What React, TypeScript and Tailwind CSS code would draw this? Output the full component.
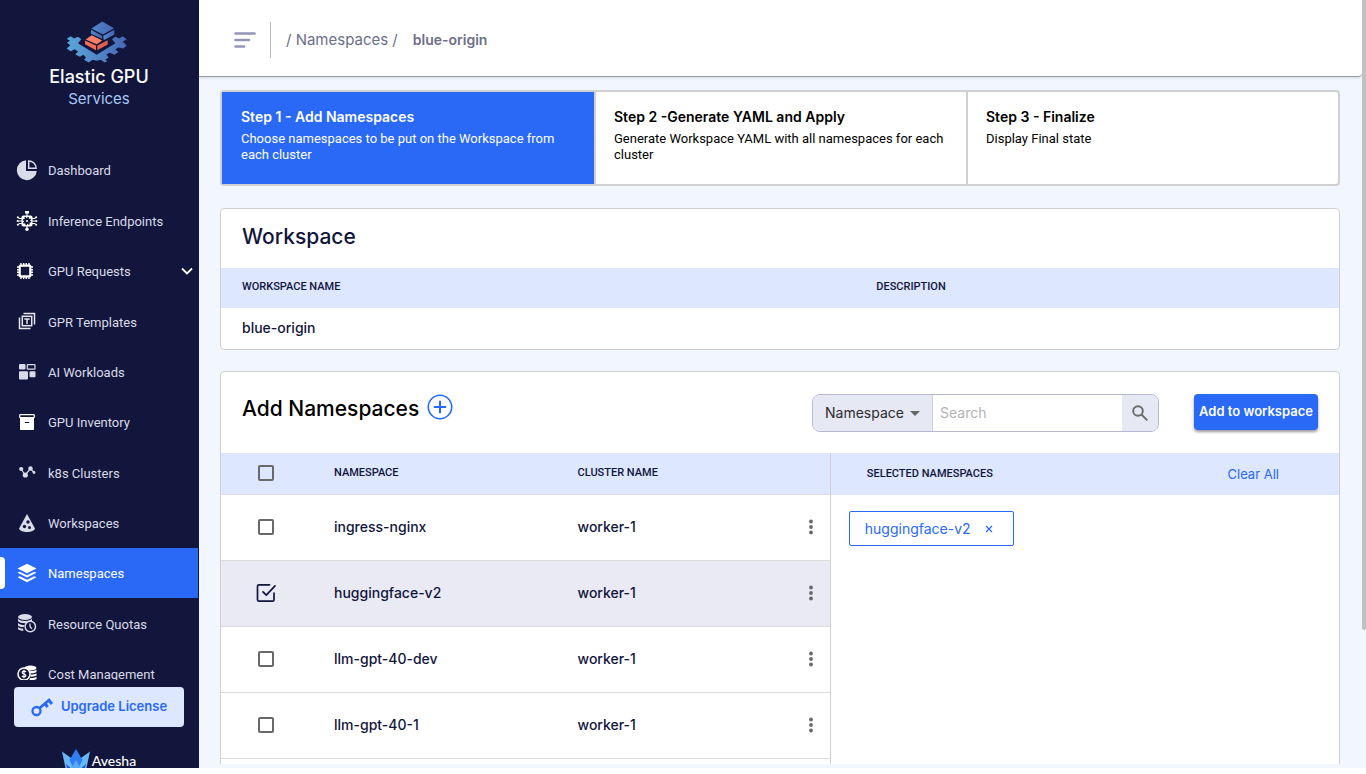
import { useState, type ReactNode } from "react";

type NavItem = {
  label: string;
  icon: ReactNode;
  active?: boolean;
  expandable?: boolean;
};

const NAV_ITEMS: NavItem[] = [
  { label: "Dashboard", icon: <DashboardIcon /> },
  { label: "Inference Endpoints", icon: <InferenceIcon /> },
  { label: "GPU Requests", icon: <ChipIcon />, expandable: true },
  { label: "GPR Templates", icon: <TemplatesIcon /> },
  { label: "AI Workloads", icon: <WorkloadsIcon /> },
  { label: "GPU Inventory", icon: <InventoryIcon /> },
  { label: "k8s Clusters", icon: <ClustersIcon /> },
  { label: "Workspaces", icon: <WorkspacesIcon /> },
  { label: "Namespaces", icon: <LayersIcon />, active: true },
  { label: "Resource Quotas", icon: <QuotasIcon /> },
  { label: "Cost Management", icon: <CostIcon /> },
];

const STEPS = [
  {
    title: "Step 1 - Add Namespaces",
    text: "Choose namespaces to be put on the Workspace from each cluster",
  },
  {
    title: "Step 2 -Generate YAML and Apply",
    text: "Generate Workspace YAML with all namespaces for each cluster",
  },
  { title: "Step 3 - Finalize", text: "Display Final state" },
];

const NAMESPACES = [
  { name: "ingress-nginx", cluster: "worker-1" },
  { name: "huggingface-v2", cluster: "worker-1" },
  { name: "llm-gpt-40-dev", cluster: "worker-1" },
  { name: "llm-gpt-40-1", cluster: "worker-1" },
];

function DashboardIcon() {
  return (
    <svg viewBox="0 0 22 22" className="size-[22px]" fill="#dadbe8">
      <path d="M10 1.2A10 10 0 1 0 20.800 12H10Z" />
      <path
        d="M12.700 1.900v7.400h7.400a7.400 7.400 0 0 0-7.400-7.400Z"
        fill="none"
        stroke="#dadbe8"
        strokeWidth="1.500"
      />
    </svg>
  );
}

function InferenceIcon() {
  return (
    <svg viewBox="0 0 22 22" className="size-[22px]" fill="#fff">
      <rect x="5.500" y="5.500" width="11" height="11" rx="1.800" />
      <circle cx="11" cy="11" r="3.200" fill="#12153c" />
      <circle cx="11" cy="11" r="3.700" fill="none" stroke="#12153c" strokeWidth="1.200" strokeDasharray="1.450 1.450" />
      <circle cx="11" cy="11" r="1" />
      <path
        d="M11 2v4M11 16v3M6 8.500H3.500L2 7.500M6 11H1.500M6 13.500H3.500L2 14.500M16 8.500h2.500l1.500-1M16 11h4.500M16 13.500h2.500l1.500 1"
        fill="none"
        stroke="#fff"
        strokeWidth="1.100"
      />
      <rect x="9" y="1" width="4" height="2.500" />
      <circle cx="11" cy="19.200" r="1.700" />
      <circle cx="1.800" cy="7.300" r="1" />
      <circle cx="1.600" cy="11" r="1" />
      <circle cx="1.800" cy="14.700" r="1" />
      <circle cx="20.200" cy="7.300" r="1" />
      <circle cx="20.400" cy="11" r="1" />
      <circle cx="20.200" cy="14.700" r="1" />
    </svg>
  );
}

function ChipIcon() {
  return (
    <svg viewBox="0 0 18 18" className="mr-1 size-[18px]" fill="none" stroke="#fff">
      <rect x="3.700" y="3.700" width="10.600" height="10.600" rx=".6" strokeWidth="2.200" />
      <path
        d="M5 1v2M7.700 1v2M10.300 1v2M13 1v2M5 15v2M7.700 15v2M10.300 15v2M13 15v2M1 5h2M1 7.700h2M1 10.300h2M1 13h2M15 5h2M15 7.700h2M15 10.300h2M15 13h2"
        strokeWidth="1.400"
      />
    </svg>
  );
}

function TemplatesIcon() {
  return (
    <svg viewBox="0 0 18 18" className="size-[18px]" fill="none" stroke="#e6e7f0">
      <path d="M5.500 1.500h11V12.500M1.500 5.500v11h11" strokeWidth="1.500" />
      <rect x="4.300" y="4.300" width="9.400" height="9.400" strokeWidth="1.500" />
      <path d="M6.300 7h5.400M9 7v5" strokeWidth="1.500" />
    </svg>
  );
}

function WorkloadsIcon() {
  return (
    <svg viewBox="0 0 18 18" className="size-[18px]" fill="#dadbe8">
      <rect x="1" y="1" width="6.500" height="5.500" rx="1" />
      <rect x="1" y="8.200" width="9" height="8.300" rx="1" />
      <rect x="11.500" y="8.200" width="6" height="6" rx="1" />
      <rect x="9.300" y="1.600" width="7.700" height="4.600" rx=".6" fill="none" stroke="#dadbe8" strokeWidth="1.200" />
    </svg>
  );
}

function InventoryIcon() {
  return (
    <svg viewBox="0 0 18 18" className="size-[18px]" fill="#fff">
      <rect x="1.700" y="1.700" width="14.600" height="3" rx=".8" fill="none" stroke="#fff" strokeWidth="1.200" />
      <path d="M2 5h14v11.200a.8.8 0 0 1-.8.8H2.800a.8.8 0 0 1-.8-.8Z" />
      <path d="M6.800 9.500h4.400" stroke="#12153c" strokeWidth="1" />
    </svg>
  );
}

function ClustersIcon() {
  return (
    <svg viewBox="0 0 18 18" className="size-[18px]" fill="#dadbe8">
      <path d="m3 6 4.200 6L12.500 5.500 16 9.500" fill="none" stroke="#dadbe8" strokeWidth="1.200" />
      <circle cx="3.200" cy="6" r="2.100" />
      <circle cx="7.300" cy="12" r="2.600" />
      <circle cx="12.500" cy="5.500" r="2.200" />
      <circle cx="16" cy="9.500" r="1.400" />
    </svg>
  );
}

function WorkspacesIcon() {
  return (
    <svg viewBox="0 0 18 20" className="h-5 w-[18px]" fill="#dadbe8">
      <path d="M9 1 1.200 15.200C1.200 20.300 16.800 20.300 16.800 15.200Z" />
      <circle cx="10" cy="9" r="1.700" fill="#12153c" />
      <circle cx="6.500" cy="13.500" r="1.700" fill="#12153c" />
      <circle cx="11.500" cy="14.500" r="1.500" fill="#12153c" />
    </svg>
  );
}

function LayersIcon() {
  return (
    <svg viewBox="0 0 20 20" className="size-5" fill="#fff">
      <path d="M10 .8 19.500 5.500 10 10.200.5 5.500Z" />
      <path d="m.5 9.800 2.200-1.100L10 12.300l7.300-3.600 2.200 1.100L10 14.600Z" />
      <path d="m.5 14.300 2.200-1.100L10 16.800l7.300-3.600 2.200 1.100L10 19.200Z" />
    </svg>
  );
}

function QuotasIcon() {
  return (
    <svg viewBox="0 0 20 20" className="size-5" fill="#dadbe8">
      <ellipse cx="8" cy="4" rx="7" ry="3" />
      <path d="M1 5.800c2.500 3 11.500 3 14 0v2.400l-4 1.700c-4 1-8.500 0-10-1.600Z" />
      <path d="M1 10c1.500 1.500 4 2 6.500 2l-1 2.300C4 14.200 2 13.600 1 12.600Z" />
      <path d="M1 14c1.200 1 3 1.600 5 1.700l.6 2.100C4 17.800 2 17 1 16.200Z" />
      <circle cx="13.300" cy="13.500" r="5.200" fill="#12153c" stroke="#dadbe8" strokeWidth="1.500" />
      <path d="M13 10.500v3.300l2 2" fill="none" stroke="#dadbe8" strokeWidth="1.300" />
    </svg>
  );
}

function CostIcon() {
  return (
    <svg viewBox="0 0 20 20" className="size-5" fill="#fff">
      <ellipse cx="13.500" cy="4" rx="6" ry="2.600" />
      <path d="M12 7c3 .3 6-.2 7.500-1.300v2.200c-1.700 1.200-4 1.500-6.500 1.300ZM13.500 10.500c2.500.1 4.600-.3 6-1.200v2.200c-1.600.9-3.800 1.300-6 1.100ZM13.300 14c2.600.1 4.700-.3 6.200-1.200v2.200c-2 1.300-4.500 1.500-7.200 1.200Z" />
      <circle cx="7" cy="10" r="6" fill="#12153c" stroke="#fff" strokeWidth="1.500" />
      <path
        d="M9 8C8 6.700 5.200 6.900 5.200 8.500c0 1.900 3.700 1.200 3.700 3.100 0 1.600-2.900 1.700-3.900.3M7 5.800v8.400"
        fill="none"
        stroke="#fff"
        strokeWidth="1.200"
      />
    </svg>
  );
}

function BrandMark() {
  return (
    <svg viewBox="204 62 186 128" className="mr-1 h-[43px] w-[62px]" aria-hidden="true">
      <defs>
        <linearGradient id="gear" x1="0" x2="1">
          <stop offset="0" stopColor="#5ba6dc" />
          <stop offset="1" stopColor="#4668b4" />
        </linearGradient>
        <linearGradient id="cube" x1="0" x2="1">
          <stop offset="0" stopColor="#5188c8" />
          <stop offset="1" stopColor="#4365b2" />
        </linearGradient>
      </defs>
      <path
        fill="url(#gear)"
        d="M218 110 228 117 240 112 250 119 240 131 296 166 352 131 342 119 352 112 364 117 374 110 386 119 374 127 386 138 376 147 362 144 352 149 361 158 349 166 336 160 325 164 332 174 322 180 328 185 320 189 308 181 296 184 284 181 272 189 258 181 264 174 256 166 246 172 232 165 240 156 230 149 218 155 206 147 217 137 207 130 216 124 206 118Z"
      />
      <g fill="url(#cube)">
        <path d="m313 66 35 20-33 19-35-18Z" />
        <path d="m279 91 33 18v14l-33-17Z" />
        <path d="m349 91-33 18v14l33-18Z" />
      </g>
      <path fill="#12153c" d="m278 102 43 20 12-5v20l-37 21-39-18v-22Z" />
      <path fill="#fa8068" d="m281 107 32 16-17 11-33-14Z" />
      <path fill="#f06d58" d="m261 123 33 15v14l-33-18Z" />
      <path fill="#e3604e" d="m298 138 31-16v13l-31 17Z" />
    </svg>
  );
}

function AveshaMark() {
  return (
    <svg viewBox="0 0 28 26" className="h-[26px] w-7" aria-hidden="true">
      <path fill="#69b7f5" d="M0 2.500 9 9l5 13v4H5Z" />
      <path fill="#69b7f5" d="M28 2.500 19 9l-5 13v4h9Z" />
      <path fill="#2f7df0" d="M14 0 20.500 11 14 24 7.500 11Z" />
      <path fill="#2257c8" d="m4 15 10 9 10-9-3 11H7Z" />
      <path fill="#58aaf5" d="m14 11 5 9-5 6-5-6Z" />
    </svg>
  );
}

function KeyIcon() {
  return (
    <svg viewBox="0 0 22 20" className="h-5 w-[22px]" fill="none" stroke="#2969f5" aria-hidden="true">
      <circle cx="5.500" cy="14" r="4" strokeWidth="2.300" />
      <path d="M8.500 11.300 19 2.300" strokeWidth="2.600" />
      <path d="m13.500 6 3.200 4M17 2.500l4 4.500" strokeWidth="3" />
    </svg>
  );
}

function Sidebar() {
  return (
    <aside className="flex w-[199px] shrink-0 flex-col bg-[#12153c] pr-px">
      <div className="flex h-[145px] shrink-0 flex-col items-center pt-5">
        <BrandMark />
        <p className="mt-0.5 text-lg leading-6 font-medium text-white">Elastic GPU</p>
        <p className="text-[15px] leading-5 text-[#a9c8f5]">Services</p>
      </div>

      <nav className="min-h-0 flex-1 overflow-hidden">
        <ul className="grid h-[554px] auto-rows-fr">
          {NAV_ITEMS.map((item) => (
            <li key={item.label}>
              <a
                href="#"
                aria-current={item.active ? "page" : undefined}
                className={
                  item.active
                    ? "relative flex h-full items-center bg-[#2969f5] pl-4 font-['Roboto'] text-[13px] text-white"
                    : "relative flex h-full items-center pl-4 font-['Roboto'] text-[13px] text-[#dadbe8]"
                }
              >
                {item.active ? (
                  <span className="absolute top-1/2 left-0 h-8 w-[5px] -translate-y-1/2 rounded-r bg-white" />
                ) : null}
                <span className="flex w-[22px] justify-center">{item.icon}</span>
                <span className="ml-2.5 pt-0.5">{item.label}</span>
                {item.expandable ? (
                  <svg viewBox="0 0 12 8" className="mr-[5px] ml-auto h-2 w-3" fill="none" stroke="#fff" strokeWidth="1.800">
                    <path d="m1 1.500 5 5 5-5" />
                  </svg>
                ) : null}
              </a>
            </li>
          ))}
        </ul>
      </nav>

      <div className="flex h-[88px] shrink-0 flex-col items-center overflow-hidden pt-[7px]">
        <button
          type="button"
          className="flex h-10 w-[170px] shrink-0 items-center justify-center gap-2 rounded bg-[#dde7ff] text-[13px] font-semibold text-[#2969f5]"
        >
          <KeyIcon />
          Upgrade License
        </button>
        <div className="mt-[22px] flex items-start gap-0.5">
          <AveshaMark />
          <span className="font-['Lato'] text-sm leading-6 font-medium text-white">Avesha</span>
        </div>
      </div>
    </aside>
  );
}

function Header() {
  return (
    <header className="flex h-[77px] shrink-0 items-center rounded-br border-b border-[#999da3] bg-white pt-1 pl-[35px] shadow-sm">
      <button type="button" aria-label="Toggle menu">
        <svg viewBox="0 0 22 16" className="h-4 w-[22px]" stroke="#9396b8" strokeWidth="2.600" strokeLinecap="round">
          <path d="M1.500 1.500h19M1.500 8h13.500M1.500 14.500H10" />
        </svg>
      </button>
      <span className="ml-3.5 h-9 w-px bg-[#b5b7d3]" />
      <nav className="ml-[15px] flex items-center gap-[15px] text-[#6c6f88]">
        <span className="text-[15px]">
          / <a href="#">Namespaces</a> /
        </span>
        <span className="text-sm font-semibold">blue-origin</span>
      </nav>
    </header>
  );
}

function Steps() {
  return (
    <ol className="grid h-24 shrink-0 grid-cols-3 rounded border-2 border-[#d0d0d0] bg-white">
      {STEPS.map((step, index) => (
        <li
          key={step.title}
          className={
            index === 0
              ? "bg-[#2969f5] px-[19px] pt-[15px] text-white"
              : "border-l-2 border-[#d0d0d0] px-[18px] pt-[15px] text-black"
          }
        >
          <h2 className="text-sm leading-5 font-semibold">{step.title}</h2>
          <p className="mt-1 font-['Roboto'] text-[13px] leading-4">{step.text}</p>
        </li>
      ))}
    </ol>
  );
}

function WorkspaceCard() {
  return (
    <section className="mt-[22px] shrink-0 rounded border border-[#cfcfcf] bg-white">
      <h2 className="flex h-[59px] items-center px-[21px] pb-1 text-[21px] font-medium text-[#12153c]">
        Workspace
      </h2>
      <table className="w-full table-fixed text-left text-[#12153c]">
        <thead>
          <tr className="h-10 bg-[#dde7ff] font-['Roboto'] text-[11px]">
            <th className="w-[57%] px-[21px] pb-0.5 font-medium">WORKSPACE NAME</th>
            <th className="px-[18px] pb-0.5 font-medium">DESCRIPTION</th>
          </tr>
        </thead>
        <tbody>
          <tr className="h-[41px] text-sm font-medium">
            <td className="px-[21px] pb-0.5">blue-origin</td>
            <td />
          </tr>
        </tbody>
      </table>
    </section>
  );
}

type CheckProps = {
  label: string;
  checked: boolean;
  onChange: () => void;
};

function Check({ label, checked, onChange }: CheckProps) {
  return (
    <label className="relative mx-auto flex size-5 items-center justify-center">
      <input
        type="checkbox"
        aria-label={label}
        checked={checked}
        onChange={onChange}
        className="size-4 appearance-none rounded-xs border-2 border-[#696969] checked:border-transparent"
      />
      {checked ? (
        <svg
          viewBox="0 0 20 20"
          className="pointer-events-none absolute inset-0 size-5"
          fill="none"
          stroke="#12153c"
          strokeWidth="1.700"
          strokeLinecap="round"
          strokeLinejoin="round"
        >
          <path d="M13.500 1.800H3a1.500 1.500 0 0 0-1.500 1.500v13.400A1.500 1.500 0 0 0 3 18.200h13.500a1.500 1.500 0 0 0 1.500-1.500V10" />
          <path d="m7 8.800 3.300 3.400L19 2.800" />
        </svg>
      ) : null}
    </label>
  );
}

function SearchBar() {
  return (
    <div className="flex h-[38px] w-[347px] overflow-hidden rounded-lg border border-[#b5b7d3]">
      <div className="relative w-[120px] border-r border-[#cfcfd8]">
        <select
          aria-label="Search field"
          className="size-full appearance-none bg-[#e6e8f3] pl-3 text-sm text-[#2b2b2b]"
        >
          <option>Namespace</option>
          <option>Cluster Name</option>
        </select>
        <svg viewBox="0 0 10 5" className="pointer-events-none absolute top-4 right-3 h-[5px] w-2.5" fill="#666">
          <path d="M0 0h10L5 5Z" />
        </svg>
      </div>
      <input
        type="text"
        aria-label="Search"
        placeholder="Search"
        className="min-w-0 flex-1 px-[7px] text-sm outline-none placeholder:text-[#b3b3b3]"
      />
      <button
        type="button"
        aria-label="Run search"
        className="flex w-9 items-center justify-center bg-[#e6e8f3]"
      >
        <svg viewBox="0 0 16 16" className="size-4" fill="none" stroke="#696969" strokeWidth="1.900">
          <circle cx="6" cy="6" r="4.800" />
          <path d="m9.500 9.500 5.800 5.800" />
        </svg>
      </button>
    </div>
  );
}

function AddNamespacesCard() {
  const [selected, setSelected] = useState<string[]>(["huggingface-v2"]);
  const allSelected = selected.length === NAMESPACES.length;

  const toggle = (name: string) => {
    setSelected((current) =>
      current.includes(name)
        ? current.filter((item) => item !== name)
        : [...current, name],
    );
  };

  return (
    <section className="mt-[21px] shrink-0 rounded border border-[#cfcfcf] bg-white">
      <div className="flex h-[81px] items-start justify-between px-[21px] pt-[22px]">
        <div className="flex gap-2">
          <h2 className="text-[21px] leading-[30px] font-medium text-black">Add Namespaces</h2>
          <button type="button" aria-label="Add namespace" className="h-[26px]">
            <svg viewBox="0 0 26 26" className="size-[26px]" fill="none" stroke="#2969f5">
              <circle cx="13" cy="13" r="11.700" strokeWidth="1.600" />
              <path d="M13 6.800v12.400M6.800 13h12.400" strokeWidth="2" />
            </svg>
          </button>
        </div>
        <div className="flex gap-[35px]">
          <SearchBar />
          <button
            type="button"
            className="h-9 w-[124px] rounded bg-[#2969f5] text-[13px] font-semibold whitespace-nowrap text-white shadow-[0_2px_3px_rgba(0,0,0,0.4)]"
          >
            Add to workspace
          </button>
        </div>
      </div>

      <div className="grid min-h-[360px] grid-cols-[6fr_5fr]">
        <div className="border-r border-[#d0d0d0]">
          <table className="w-full table-fixed text-left text-[#12153c]">
            <thead>
              <tr className="h-[41px] border-b border-[#dcdcdc] bg-[#dde7ff] font-['Roboto'] text-[11px]">
                <th className="w-[90px]">
                  <Check
                    label="Select all namespaces"
                    checked={allSelected}
                    onChange={() =>
                      setSelected(allSelected ? [] : NAMESPACES.map((row) => row.name))
                    }
                  />
                </th>
                <th className="w-2/5 pl-[23px] font-medium">NAMESPACE</th>
                <th className="pl-[23px] font-medium">CLUSTER NAME</th>
                <th className="w-[37px]" />
              </tr>
            </thead>
            <tbody>
              {NAMESPACES.map((row) => (
                <tr
                  key={row.name}
                  className={
                    selected.includes(row.name)
                      ? "h-[66px] border-b border-[#dcdcdc] bg-[#eaeaf4] text-sm font-medium"
                      : "h-[66px] border-b border-[#dcdcdc] text-sm font-medium"
                  }
                >
                  <td>
                    <Check
                      label={`Select ${row.name}`}
                      checked={selected.includes(row.name)}
                      onChange={() => toggle(row.name)}
                    />
                  </td>
                  <td className="pl-[23px]">{row.name}</td>
                  <td className="pl-[23px]">{row.cluster}</td>
                  <td>
                    <button type="button" aria-label={`Actions for ${row.name}`} className="flex w-full justify-center">
                      <svg viewBox="0 0 4 16" className="h-4 w-1" fill="#696969">
                        <circle cx="2" cy="2.500" r="1.900" />
                        <circle cx="2" cy="8" r="1.900" />
                        <circle cx="2" cy="13.500" r="1.900" />
                      </svg>
                    </button>
                  </td>
                </tr>
              ))}
            </tbody>
          </table>
        </div>

        <div>
          <div className="flex h-[42px] items-center justify-between bg-[#dde7ff] pr-[60px] pl-9">
            <h3 className="font-['Roboto'] text-[11px] font-medium text-[#12153c]">SELECTED NAMESPACES</h3>
            <button
              type="button"
              onClick={() => setSelected([])}
              className="pt-0.5 text-[13px] text-[#2969f5]"
            >
              Clear All
            </button>
          </div>
          <ul className="flex flex-wrap gap-3 px-[18px] pt-4">
            {selected.map((name) => (
              <li
                key={name}
                className="flex h-[35px] items-center rounded-xs border border-[#2969f5] pr-5 pl-[15px] text-sm text-[#2969f5]"
              >
                {name}
                <button type="button" aria-label={`Remove ${name}`} onClick={() => toggle(name)} className="ml-3.5">
                  <svg viewBox="0 0 8 8" className="size-2" stroke="#2969f5" strokeWidth="1.200">
                    <path d="m1 1 6 6M7 1 1 7" />
                  </svg>
                </button>
              </li>
            ))}
          </ul>
        </div>
      </div>
    </section>
  );
}

export default function App() {
  return (
    <div className="h-screen bg-white pb-1.5 font-['Inter',sans-serif]">
      <div className="flex h-full overflow-hidden">
        <Sidebar />
        <div className="flex min-w-0 flex-1 flex-col bg-[#f2f7ff] pb-1">
          <Header />
          <main className="flex min-h-0 flex-1 flex-col overflow-hidden pt-[13px] pr-[22px] pl-[21px]">
            <Steps />
            <WorkspaceCard />
            <AddNamespacesCard />
          </main>
        </div>
        <div className="w-1 shrink-0 bg-[#f2f7ff]">
          <div className="h-[82%] rounded-b-xs bg-[#c1c1c1]" />
        </div>
      </div>
    </div>
  );
}
